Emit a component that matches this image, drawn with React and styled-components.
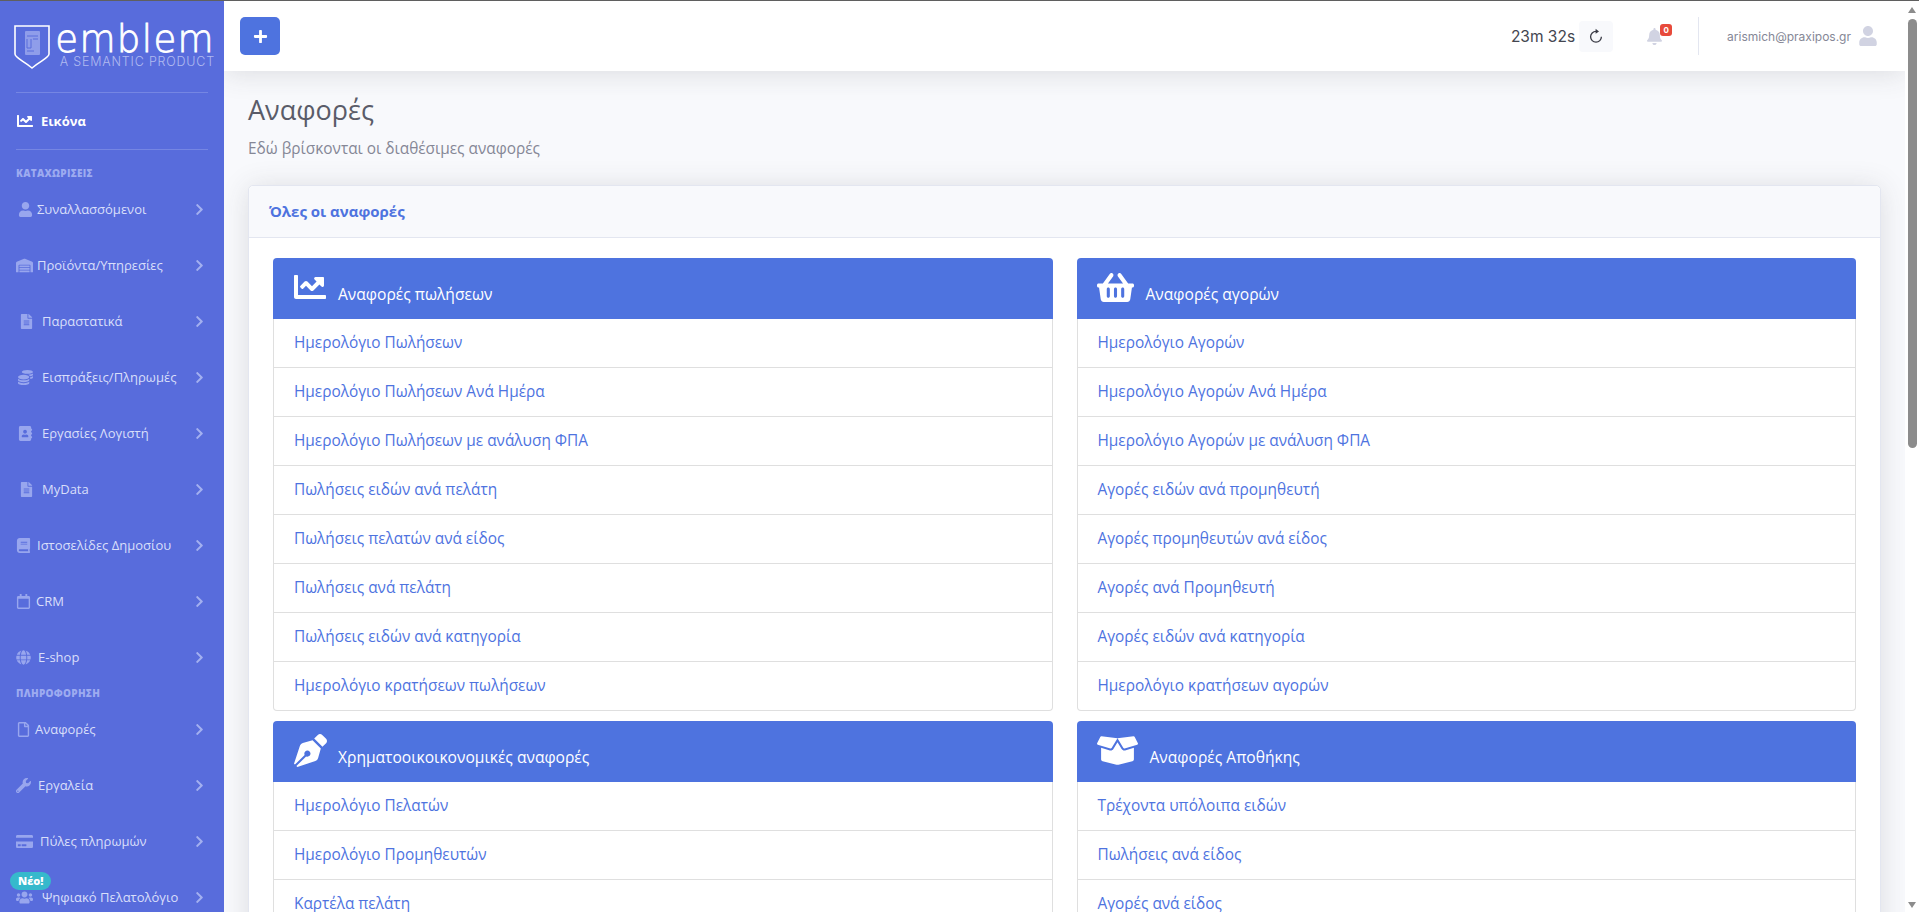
import React from 'react'
import styled, { createGlobalStyle } from 'styled-components'
import {
    FaAddressBook, FaBell, FaBook, FaBoxOpen, FaChartLine, FaChevronRight, FaCoins, FaCreditCard, FaFileAlt,
    FaGlobe, FaPenNib, FaPlus, FaRegCalendar, FaRegFile, FaShoppingBasket, FaUser, FaUsers, FaWarehouse, FaWrench,
} from 'react-icons/fa'

const FONT = '"Open Sans", "Noto Sans", sans-serif'

const GlobalStyle = createGlobalStyle`
    html, body {
        margin: 0;
        height: 100%;
        overflow: hidden;
    }
    body {
        font-family: ${FONT};
        background: #f8f9fc;
    }
    * {
        box-sizing: border-box;
    }
`

const Page = styled.div`
    display: flex;
    height: 100vh;
    border-top: 1px solid #5f5f5f;
    overflow: hidden;
`

const Sidebar = styled.aside`
    flex: 0 0 224px;
    padding: 0 16px;
    background: #586cdc;
    overflow: hidden;
`

const Brand = styled.div`
    display: flex;
    align-items: flex-start;
    gap: 5px;
    height: 91px;
    margin: 0 -6px 0 -2px;
    padding-top: 24px;
    color: #fff;

    svg {
        flex: none;
    }
`

const BrandText = styled.div`
    display: flex;
    flex: none;
    flex-direction: column;
    align-items: flex-end;
    width: 160px;
`

const BrandName = styled.div`
    font-family: "DejaVu Sans", sans-serif;
    font-size: 37px;
    font-weight: 200;
    line-height: 30px;
    letter-spacing: 1.4px;
    -webkit-text-stroke: .8px #fff;
`

const BrandTag = styled.div`
    font-family: Inter, sans-serif;
    font-size: 12.5px;
    font-weight: 300;
    line-height: 13px;
    letter-spacing: .8px;
    color: #b0baf0;
    white-space: nowrap;
`

const Divider = styled.hr`
    height: 1px;
    margin: 0;
    border: 0;
    background: #7586e3;
`

const HomeLink = styled.div`
    display: flex;
    align-items: center;
    gap: 8px;
    height: 56px;
    padding-left: 1px;
    color: #fff;
    font-size: 13px;
    font-weight: 700;

    svg {
        font-size: 16px;
    }
`

const MenuHeading = styled.div`
    height: 16px;
    margin-top: ${(p) => p.$top || 0}px;
    color: #9dabf0;
    font-size: 10px;
    font-weight: 800;
    line-height: 16px;
    letter-spacing: .3px;
    white-space: nowrap;
`

const MenuRow = styled.div`
    position: relative;
    display: flex;
    align-items: center;
    height: 56px;
    color: #d9dffa;
    font-size: 13px;
    white-space: nowrap;
`

const MenuIcon = styled.span`
    display: flex;
    flex: 0 0 ${(p) => p.$text}px;
    padding-left: ${(p) => p.$left}px;
    color: #98a6ee;
    font-size: ${(p) => p.$size || 15}px;
`

const MenuLabel = styled.span`
    flex: 1;
`

const Chevron = styled(FaChevronRight)`
    margin-right: 2px;
    color: #a3b0f0;
    font-size: 13px;
`

const NewBadge = styled.span`
    position: absolute;
    top: 3px;
    left: -6px;
    padding: 0 8px;
    border-radius: 10px;
    background: #36b9cc;
    color: #fff;
    font-size: 11px;
    font-weight: 800;
    line-height: 18px;
`

const Main = styled.main`
    flex: 1;
    min-width: 0;
    overflow: hidden;
`

const Topbar = styled.header`
    display: flex;
    align-items: center;
    height: 70px;
    padding: 0 27px 0 16px;
    background: #fff;
    box-shadow: 0 .15rem 1.75rem 0 rgba(58, 59, 69, .15);
`

const AddButton = styled.button`
    display: flex;
    align-items: center;
    justify-content: center;
    width: 40px;
    height: 38px;
    margin-right: auto;
    padding: 0;
    border: 0;
    border-radius: 5px;
    background: #4e73df;
    color: #fff;
    font-size: 15px;
`

const Timer = styled.span`
    color: #444650;
    font-family: Inter, sans-serif;
    font-size: 15.5px;
`

const RefreshButton = styled.span`
    display: flex;
    align-items: center;
    justify-content: center;
    width: 34px;
    height: 31px;
    margin-left: 4px;
    border-radius: 4px;
    background: #f8f9fc;
    color: #3a3b45;
`

const BellWrap = styled.span`
    position: relative;
    display: flex;
    margin-left: 33px;
    color: #d1d3e2;
    font-size: 17px;
`

const BellCount = styled.span`
    position: absolute;
    top: -4px;
    left: 14px;
    width: 12px;
    height: 12px;
    border-radius: 3px;
    background: #e74a3b;
    color: #fff;
    font-family: Inter, sans-serif;
    font-size: 8px;
    font-weight: 700;
    line-height: 12px;
    text-align: center;
`

const TopDivider = styled.span`
    width: 1px;
    height: 38px;
    margin: 0 28px 0 35px;
    background: #e3e6f0;
`

const UserMail = styled.span`
    color: #858796;
    font-family: Inter, sans-serif;
    font-size: 12px;
`

const UserIcon = styled(FaUser)`
    margin-left: 7px;
    color: #d1d3e2;
    font-size: 20px;
`

const Content = styled.div`
    padding: 22px 24px 0;
`

const PageTitle = styled.h1`
    margin: 0;
    color: #5a5c69;
    font-size: 27px;
    font-weight: 400;
    line-height: 34px;
`

const PageSub = styled.p`
    margin: 10px 0 24px;
    color: #858796;
    font-size: 15.4px;
    line-height: 24px;
`

const Card = styled.section`
    border: 1px solid #e3e6f0;
    border-radius: 5px;
    background: #fff;
    box-shadow: 0 .15rem 1.75rem 0 rgba(58, 59, 69, .15);
`

const CardHeader = styled.div`
    height: 52px;
    padding-left: 20px;
    border-bottom: 1px solid #e3e6f0;
    border-radius: 5px 5px 0 0;
    background: #f8f9fc;
    color: #4e73df;
    font-size: 15px;
    font-weight: 700;
    line-height: 50px;
`

const CardBody = styled.div`
    display: grid;
    grid-template-columns: 1fr 1fr;
    gap: 10px 24px;
    padding: 20px 24px;
`

const Panel = styled.div`
    min-width: 0;
`

const PanelHeader = styled.div`
    display: flex;
    align-items: center;
    height: 61px;
    padding-left: ${(p) => p.$left}px;
    border-radius: 4px 4px 0 0;
    background: #4e73df;
    color: #fff;
    font-size: 15.6px;

    svg {
        flex: none;
        margin-top: -3px;
        font-size: ${(p) => p.$icon}px;
    }
`

const PanelTitle = styled.span`
    margin: 11px 0 0 ${(p) => p.$gap}px;
`

const PanelList = styled.ul`
    margin: 0;
    padding: 0;
    border: 1px solid #dfdfdf;
    border-top: 0;
    border-radius: 0 0 4px 4px;
    list-style: none;
`

const PanelItem = styled.li`
    height: 49px;
    padding-left: 20px;
    border-bottom: 1px solid #dfdfdf;
    color: #4e73df;
    font-size: 15.4px;
    line-height: 48px;

    &:last-child {
        height: 48px;
        border-bottom: 0;
    }
`

const ScrollTrack = styled.div`
    position: relative;
    flex: 0 0 14px;
    background: #fff;
`

const ScrollArrow = styled.span`
    position: absolute;
    left: 3px;
    ${(p) => (p.$down ? 'bottom: 4px;' : 'top: 6px;')}
    border-left: 4.5px solid transparent;
    border-right: 4.5px solid transparent;
    ${(p) => (p.$down ? 'border-top' : 'border-bottom')}: 6px solid #8c8c8c;
`

const ScrollThumb = styled.div`
    position: absolute;
    top: 18px;
    left: 3px;
    width: 9px;
    height: 429px;
    border-radius: 5px;
    background: #8c8c8c;
`

const menuTop = [
    { icon: FaUser, label: 'Συναλλασσόμενοι', left: 2, text: 21 },
    { icon: FaWarehouse, label: 'Προϊόντα/Υπηρεσίες', left: 0, text: 21, size: 17 },
    { icon: FaFileAlt, label: 'Παραστατικά', left: 3, text: 26 },
    { icon: FaCoins, label: 'Εισπράξεις/Πληρωμές', left: 2, text: 26 },
    { icon: FaAddressBook, label: 'Εργασίες Λογιστή', left: 2, text: 26 },
    { icon: FaFileAlt, label: 'MyData', left: 3, text: 26 },
    { icon: FaBook, label: 'Ιστοσελίδες Δημοσίου', left: 0, text: 21 },
    { icon: FaRegCalendar, label: 'CRM', left: 0, text: 20 },
    { icon: FaGlobe, label: 'E-shop', left: 0, text: 22 },
]

const menuInfo = [
    { icon: FaRegFile, label: 'Αναφορές', left: 0, text: 19 },
    { icon: FaWrench, label: 'Εργαλεία', left: 0, text: 22 },
    { icon: FaCreditCard, label: 'Πύλες πληρωμών', left: 0, text: 24, size: 17 },
    { icon: FaUsers, label: 'Ψηφιακό Πελατολόγιο', left: 0, text: 26, size: 17, badge: 'Νέο!' },
]

const panels = [
    {
        icon: FaChartLine, size: 32, left: 21, gap: 12, title: 'Αναφορές πωλήσεων',
        items: ['Ημερολόγιο Πωλήσεων', 'Ημερολόγιο Πωλήσεων Ανά Ημέρα', 'Ημερολόγιο Πωλήσεων με ανάλυση ΦΠΑ', 'Πωλήσεις ειδών ανά πελάτη', 'Πωλήσεις πελατών ανά είδος', 'Πωλήσεις ανά πελάτη', 'Πωλήσεις ειδών ανά κατηγορία', 'Ημερολόγιο κρατήσεων πωλήσεων'],
    },
    {
        icon: FaShoppingBasket, size: 37, left: 20, gap: 12, title: 'Αναφορές αγορών',
        items: ['Ημερολόγιο Αγορών', 'Ημερολόγιο Αγορών Ανά Ημέρα', 'Ημερολόγιο Αγορών με ανάλυση ΦΠΑ', 'Αγορές ειδών ανά προμηθευτή', 'Αγορές προμηθευτών ανά είδος', 'Αγορές ανά Προμηθευτή', 'Αγορές ειδών ανά κατηγορία', 'Ημερολόγιο κρατήσεων αγορών'],
    },
    {
        icon: FaPenNib, size: 33, left: 21, gap: 11, title: 'Χρηματοοικοικονομικές αναφορές',
        items: ['Ημερολόγιο Πελατών', 'Ημερολόγιο Προμηθευτών', 'Καρτέλα πελάτη'],
    },
    {
        icon: FaBoxOpen, size: 41, left: 20, gap: 12, title: 'Αναφορές Αποθήκης',
        items: ['Τρέχοντα υπόλοιπα ειδών', 'Πωλήσεις ανά είδος', 'Αγορές ανά είδος'],
    },
]

function ShieldLogo() {
    return (
        <svg width="36" height="44" viewBox="0 0 36 44" fill="none">
            <path d="M1 1H35V29C35 33 26 36 18 43C10 36 1 33 1 29Z" stroke="#fff" strokeWidth="1.6" />
            <rect x="11" y="6" width="15" height="24" rx="1" fill="#8f9dea" />
            <path d="M13 11H24M13 14V23H17V14M19 14H24M13 26H20" stroke="#586cdc" strokeWidth="1" />
        </svg>
    )
}

function RefreshIcon() {
    return (
        <svg width="16" height="16" viewBox="0 0 16 16" fill="none">
            <path d="M8 3.4A5.4 5.4 0 1 0 13.4 8.8" stroke="currentColor" strokeWidth="1.3" />
            <path d="M7.6 .8L11 3.4L7.6 5.8Z" fill="currentColor" />
        </svg>
    )
}

function MenuItem({ item }) {
    const Icon = item.icon
    return (
        <MenuRow>
            <MenuIcon $left={item.left} $text={item.text} $size={item.size}><Icon /></MenuIcon>
            <MenuLabel>{item.label}</MenuLabel>
            <Chevron />
            {item.badge && <NewBadge>{item.badge}</NewBadge>}
        </MenuRow>
    )
}

export default function App() {
    return (
        <Page>
            <GlobalStyle />

            <Sidebar>
                <Brand>
                    <ShieldLogo />
                    <BrandText>
                        <BrandName>emblem</BrandName>
                        <BrandTag>A SEMANTIC PRODUCT</BrandTag>
                    </BrandText>
                </Brand>
                <Divider />
                <HomeLink><FaChartLine />Εικόνα</HomeLink>
                <Divider />
                <MenuHeading $top={15}>ΚΑΤΑΧΩΡΙΣΕΙΣ</MenuHeading>
                {menuTop.map((item) => <MenuItem key={item.label} item={item} />)}
                <MenuHeading>ΠΛΗΡΟΦΟΡΗΣΗ</MenuHeading>
                {menuInfo.map((item) => <MenuItem key={item.label} item={item} />)}
            </Sidebar>

            <Main>
                <Topbar>
                    <AddButton><FaPlus /></AddButton>
                    <Timer>23m 32s</Timer>
                    <RefreshButton><RefreshIcon /></RefreshButton>
                    <BellWrap><FaBell /><BellCount>0</BellCount></BellWrap>
                    <TopDivider />
                    <UserMail>arismich@praxipos.gr</UserMail>
                    <UserIcon />
                </Topbar>

                <Content>
                    <PageTitle>Αναφορές</PageTitle>
                    <PageSub>Εδώ βρίσκονται οι διαθέσιμες αναφορές</PageSub>
                    <Card>
                        <CardHeader>Όλες οι αναφορές</CardHeader>
                        <CardBody>
                            {panels.map((panel) => {
                                const Icon = panel.icon
                                return (
                                    <Panel key={panel.title}>
                                        <PanelHeader $left={panel.left} $icon={panel.size}>
                                            <Icon />
                                            <PanelTitle $gap={panel.gap}>{panel.title}</PanelTitle>
                                        </PanelHeader>
                                        <PanelList>
                                            {panel.items.map((item) => <PanelItem key={item}>{item}</PanelItem>)}
                                        </PanelList>
                                    </Panel>
                                )
                            })}
                        </CardBody>
                    </Card>
                </Content>
            </Main>

            <ScrollTrack>
                <ScrollArrow />
                <ScrollThumb />
                <ScrollArrow $down />
            </ScrollTrack>
        </Page>
    )
}
